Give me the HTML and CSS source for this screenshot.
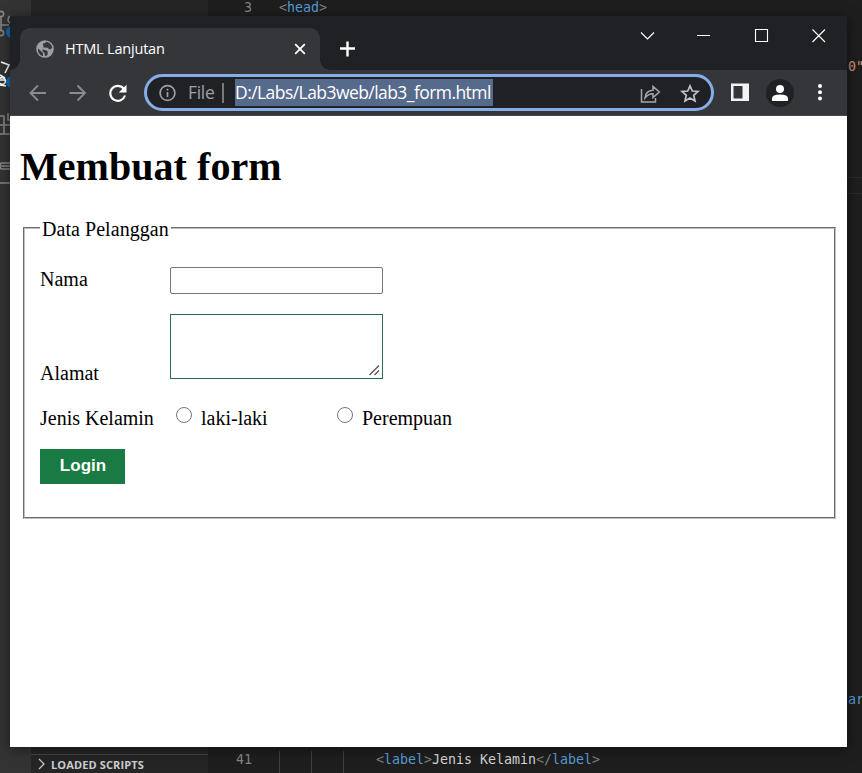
FILE: index.html
```html
<!DOCTYPE html>
<html lang="id">
<head>
<meta charset="utf-8">
<title>HTML Lanjutan</title>
<link rel="stylesheet" href="styles.css">
</head>
<body>
<div class="editor">
  <div class="activity">
    <svg width="31" height="200" viewBox="0 0 31 200" fill="none" stroke="#858585" stroke-width="1.6">
      <circle cx="1" cy="14" r="2.6"/><circle cx="1" cy="33" r="2.6"/><path d="M1 17v13M1 25h8M10 16q-2 1-2 4 0 2 2 3"/>
      <circle cx="12" cy="32" r="6" fill="#0e70c0" stroke="none"/>
      <circle cx="12" cy="82" r="6" fill="#0e70c0" stroke="none"/>
      <path d="M1 62l8 3-4 8M0 75l5 3M0 85l6 1M0 80h6" stroke="#fff"/><circle cx="2" cy="81" r="3.4" stroke="#fff"/>
      <path d="M0 116h4v18H0M0 125h10M8 113v7h3M0 134h10"/>
      <path d="M10 163H2q-2 0-2 3t2 3h8M0 166h10M0 183h10"/>
    </svg>
  </div>
  <div class="sidebar">
    <div class="section"><svg width="10" height="12" viewBox="0 0 10 12" fill="none" stroke="#ccc" stroke-width="1.2"><path d="M2 1l5 5-5 5"/></svg><span>LOADED SCRIPTS</span></div>
  </div>
  <div class="code">
    <div class="line"><span class="no">3</span><span class="src head"><i>&lt;</i><b>head</b><i>&gt;</i></span></div>
    <div class="line last"><span class="no">41</span><span class="guide g1"></span><span class="guide g2"></span><span class="guide g3"></span><span class="src label"><i>&lt;</i><b>label</b><i>&gt;</i>Jenis Kelamin<i>&lt;/</i><b>label</b><i>&gt;</i></span></div>
    <div class="current"></div>
    <span class="peek str">0"</span>
    <span class="peek attr">ar</span>
  </div>
</div>

<div class="window">
  <div class="tabs">
    <div class="tab">
      <svg class="globe" width="18" height="18" viewBox="0 0 18 18"><circle cx="9" cy="9" r="8.8" fill="#9aa0a6"/><path d="M2 8.5l5 4.500v3.300A7.300 7.300 0 0 1 2 8.500zM7 3.500q2.500-.2 3.200-1.800 5 1 6 5.800l-1.500 1.800-2 0-.5-1.500-4.700-.3V5.800L7 5.500zM9 10l2.500 1 .2 3.500q-1.400 1.800-2.900 1.500v-2.500L6.500 11V9.500z" fill="#35363a"/></svg>
      <span class="title">HTML Lanjutan</span>
      <svg class="x" width="12" height="12" viewBox="0 0 12 12" stroke="#fff" stroke-width="1.8"><path d="M1.200 1.200l9.600 9.600M10.800 1.200l-9.600 9.600"/></svg>
    </div>
    <svg class="plus" width="16" height="16" viewBox="0 0 16 16" stroke="#fff" stroke-width="2.400"><path d="M7.500 .5v15M0 7.500h15"/></svg>
    <svg class="controls" width="190" height="16" viewBox="640 27 190 16" fill="none" stroke="#fff" stroke-width="1.100"><path d="M641 32.500l6.500 6.500 6.500-6.500M697 35.500h13M755.500 29.500h12v12h-12zM812.500 29.500l12.500 12.500M825 29.500l-12.500 12.500"/></svg>
  </div>
  <div class="toolbar">
    <svg class="nav" width="104" height="22" viewBox="28 81 104 22" fill="none" stroke="#8a8c90" stroke-width="1.800"><path d="M46 92H30.500M38 84.500L30.500 92l7.500 7.500M69.500 92H85M77.500 84.500l7.500 7.500-7.500 7.500"/><path d="M123.700 87.700A7.500 7.500 0 1 0 125 94.500" stroke="#fff" stroke-width="2.100"/><path d="M126.500 83.800v7.700h-7.700z" fill="#fff" stroke="none"/></svg>
    <div class="omnibox">
      <svg width="18" height="18" viewBox="0 0 18 18" fill="none" stroke="#9aa0a6" stroke-width="1.700"><circle cx="8.500" cy="9" r="7.400"/><path d="M8.500 8v5M8.500 4.800v1.800"/></svg>
      <span class="file">File</span><span class="bar"></span><span class="url">D:/Labs/Lab3web/lab3_form.html</span>
      <svg class="share" width="60" height="22" viewBox="640 81 60 22" fill="none" stroke="#a5a7aa" stroke-width="1.500"><path d="M641.500 88v13h14v-4M645 97q.5-7.500 8-7.800v-3.700l6.300 5.500-6.300 5.500v-3.700q-5 0-8 4.200z"/><path d="M690 84.800l2.300 5.200 5.700.5-4.300 3.800 1.300 5.600-5-3-5 3 1.300-5.600-4.300-3.800 5.700-.5z" stroke="#c0c2c5" stroke-width="1.700"/></svg>
    </div>
    <svg class="tools" width="98" height="30" viewBox="730 78 98 30"><path d="M731 83.500h18v17.500h-18z" fill="#f1f3f4"/><path d="M733.500 86h9v12.500h-9z" fill="#35363a"/><circle cx="780" cy="93" r="14" fill="#202124"/><circle cx="780" cy="89" r="4" fill="#fff"/><path d="M772 101v-2.500q0-4 8-4t8 4v2.500z" fill="#fff"/><g fill="#fff"><circle cx="820" cy="86" r="2"/><circle cx="820" cy="92.300" r="2"/><circle cx="820" cy="98.600" r="2"/></g></svg>
  </div>
  <main class="page">
    <h1>Membuat form</h1>
    <form>
      <fieldset>
        <legend>Data Pelanggan</legend>
        <p class="row nama"><label>Nama</label><input type="text"></p>
        <p class="row alamat"><label>Alamat</label><span class="area"><svg width="11" height="11" viewBox="0 0 11 11" stroke="#555" stroke-width="1.300"><path d="M.5 10L10 .5M5.500 10L10 5.500"/></svg></span></p>
        <p class="row jk"><label>Jenis Kelamin</label><span class="radio"></span><span class="opt first">laki-laki</span><span class="radio"></span><span class="opt">Perempuan</span></p>
        <button type="button">Login</button>
      </fieldset>
    </form>
  </main>
</div>
</body>
</html>
```
FILE: styles.css
```css
* { box-sizing: border-box; }
body { margin: 0; width: 862px; height: 773px; overflow: hidden; position: relative; background: #1e1e1e; }
svg { display: block; flex: none; }

.editor { display: flex; height: 773px; }
.activity { width: 31px; background: #333; }
.sidebar { width: 177px; background: #252526; display: flex; flex-direction: column; justify-content: flex-end; }
.section { height: 19px; border-top: 1px solid #444; display: flex; align-items: center; padding: 0 0 0 6px; gap: 4px; color: #ccc; font: bold 11px "Open Sans", sans-serif; white-space: nowrap; letter-spacing: .12px; }
.code { flex: 1; position: relative; display: flex; flex-direction: column; justify-content: space-between; font: 13.290px/16px "DejaVu Sans Mono", monospace; color: #d4d4d4; }
.line { display: flex; height: 16px; white-space: pre; }
.line.last { height: 22px; position: relative; padding-top: 1px; }
.no { width: 44px; text-align: right; color: #858585; }
.src i { font-style: normal; color: #808080; }
.src b { font-weight: normal; color: #569cd6; }
.head { margin-left: 27px; }
.label { margin-left: 124px; }
.guide { position: absolute; top: 0; width: 1px; height: 22px; background: #404040; }
.g1 { left: 71px; }
.g2 { left: 103px; }
.g3 { left: 135px; }
.peek { position: absolute; left: 640px; }
.str { top: 59px; color: #ce9178; }
.attr { top: 692px; color: #569cd6; }
.current { position: absolute; left: 600px; right: 0; top: 177px; height: 17px; border: 1px solid #2b2b2b; border-width: 1px 0; }

.window { position: absolute; left: 10px; top: 16px; width: 837px; height: 731px; display: flex; flex-direction: column; background: #fff; box-shadow: 0 2px 12px rgba(0,0,0,.5); }
.tabs { height: 54px; background: #202124; display: flex; align-items: flex-start; padding-left: 10px; }
.tab { position: relative; width: 300px; height: 42px; margin-top: 12px; background: #35363a; border-radius: 10px 10px 0 0; display: flex; align-items: center; padding: 0 14px 0 16px; }
.tab::before, .tab::after { content: ""; position: absolute; bottom: 0; width: 10px; height: 10px; }
.tab::before { left: -10px; background: radial-gradient(circle at 0 0, transparent 9.500px, #35363a 10px); }
.tab::after { right: -10px; background: radial-gradient(circle at 100% 0, transparent 9.500px, #35363a 10px); }
.title { margin: 0 0 2px 11px; color: #fff; font: 14.500px "Open Sans", sans-serif; letter-spacing: -.2px; }
.x { margin-left: auto; }
.plus { margin: 25px 0 0 20px; }
.controls { margin: 11px 17px 0 auto; }
.toolbar { height: 46px; background: #35363a; border-bottom: 1px solid #46474a; display: flex; align-items: center; padding-left: 18px; }
.omnibox { width: 570px; height: 37px; margin-left: 12px; border: 3px solid #85ade8; border-radius: 19px; background: #202124; display: flex; align-items: center; padding: 0 11px 0 12px; font: 17.500px/27px "Open Sans", sans-serif; }
.file { width: 28px; margin-left: 11px; color: #9aa0a6; letter-spacing: -.3px; }
.bar { width: 2px; height: 20px; margin: 0 11px 0 6px; background: #77797d; }
.url { width: 258px; background: #566a8c; color: #fff; letter-spacing: -.56px; white-space: nowrap; }
.share { margin-left: auto; }
.tools { margin-left: 16px; }

.page { flex: 1; padding: 28px 11px 0 10px; font: 20px/23px "Liberation Serif", serif; color: #000; }
h1 { margin: 0; font-size: 40px; line-height: 45px; letter-spacing: .05px; }
fieldset { margin: 26px 0 0 3px; height: 304px; border: 2px groove #c0c0c0; padding: 0 15px; }
legend { padding: 3px 2px 0; letter-spacing: .05px; }
.row { display: flex; margin: 0; }
.row label { width: 130px; }
.nama { margin-top: 26px; height: 27px; }
.nama label { padding-top: 1px; }
.nama input { width: 213px; height: 27px; border: 1px solid #767676; border-radius: 2px; padding: 0; background: #fff; }
.alamat { margin-top: 20px; height: 65px; align-items: flex-end; }
.alamat label { margin-bottom: -6px; }
.area { width: 213px; height: 65px; border: 1px solid #2d6b4f; display: flex; align-items: flex-end; justify-content: flex-end; padding: 2px; }
.jk { margin-top: 28px; }
.radio { width: 16px; height: 16px; border: 1px solid #767676; border-radius: 50%; margin: 0 9px 0 6px; }
.opt.first { width: 131px; }
.opt.first + .radio { margin-left: 5px; }
button { display: block; width: 85px; height: 35px; margin-top: 19px; padding: 0 0 2px 1px; border: 0; background: #197b43; color: #fff; font: bold 17px "Liberation Sans", sans-serif; }
```
